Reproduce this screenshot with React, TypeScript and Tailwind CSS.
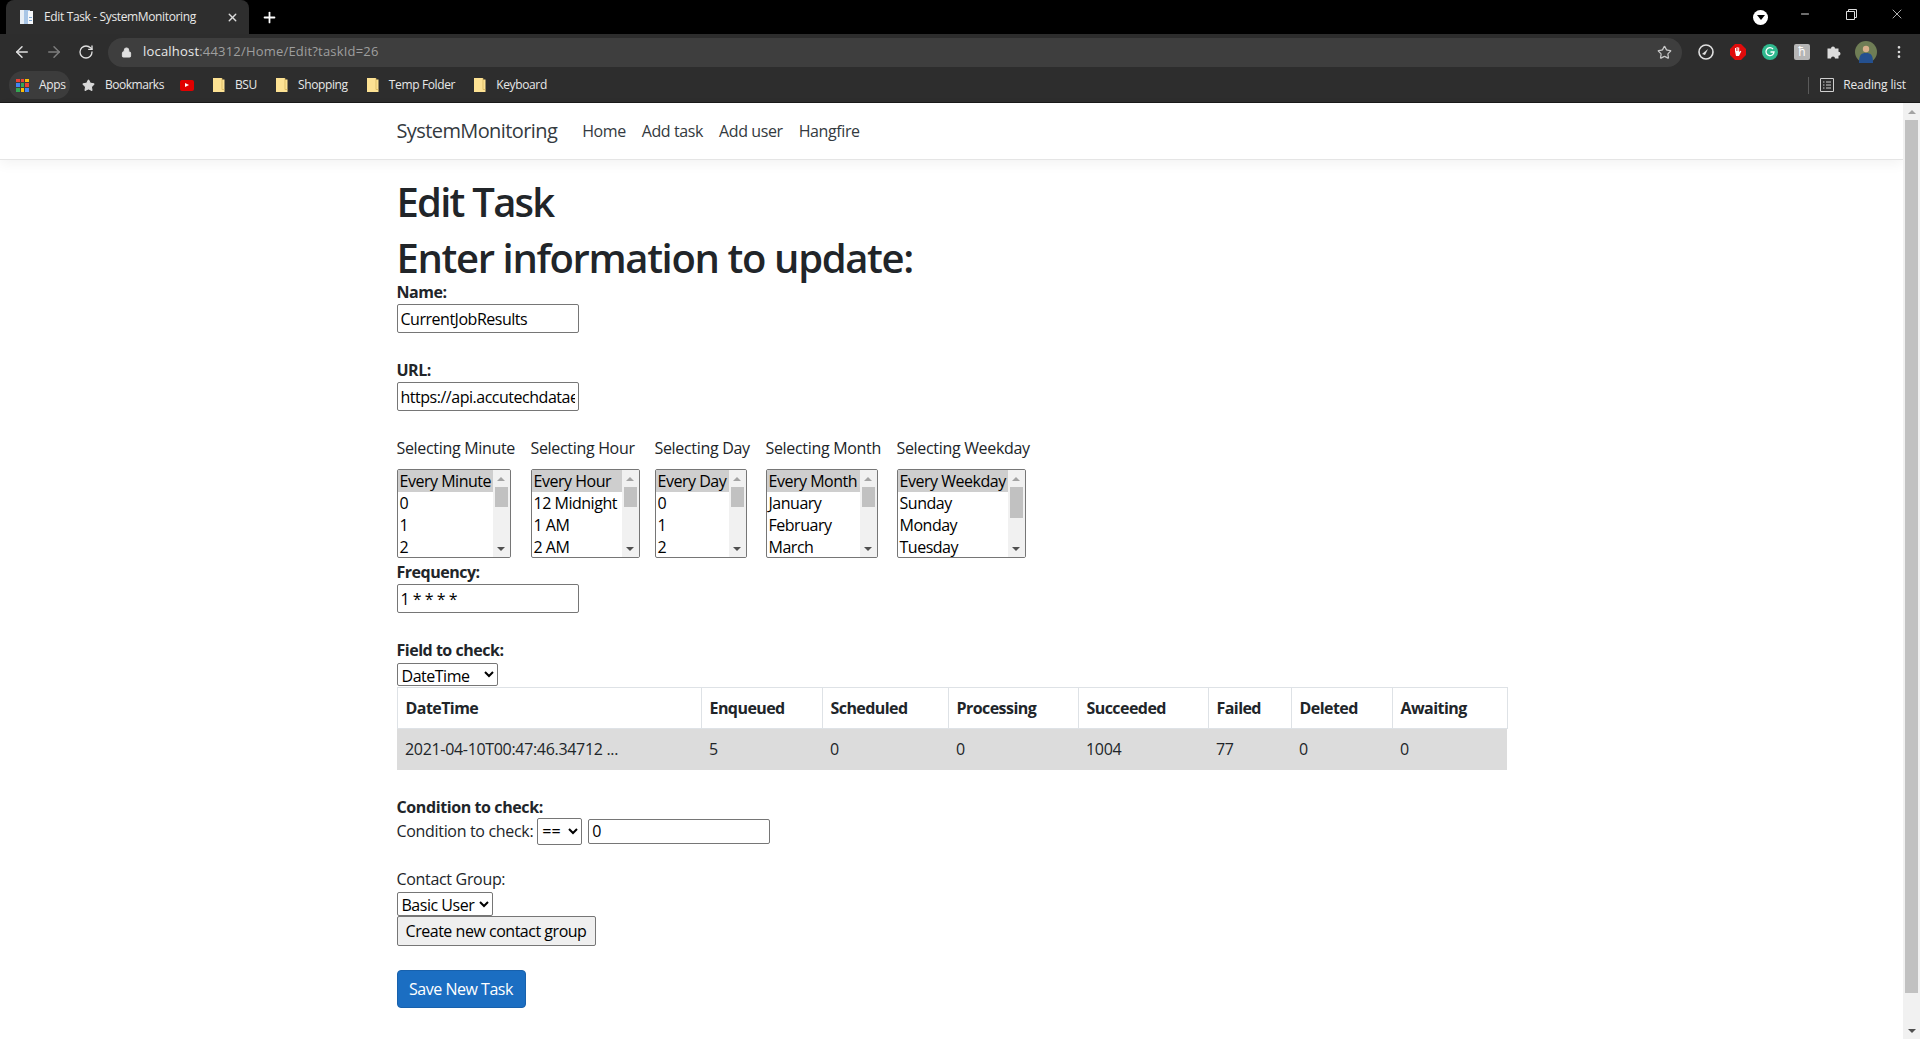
import { ArrowLeft, ArrowRight, RotateCw, Lock, Star, MoreVertical, Plus, X, Minus } from 'lucide-react';

const BOOKMARKS = ['BSU', 'Shopping', 'Temp Folder', 'Keyboard'];

const LISTBOXES = [
  { label: 'Selecting Minute', width: 'w-[114px]', slot: 'w-[134px]', thumb: 'h-[20px]', rows: ['Every Minute', '0', '1', '2'] },
  { label: 'Selecting Hour', width: 'w-[109px]', slot: 'w-[124px]', thumb: 'h-[20px]', rows: ['Every Hour', '12 Midnight', '1 AM', '2 AM'] },
  { label: 'Selecting Day', width: 'w-[92px]', slot: 'w-[111px]', thumb: 'h-[20px]', rows: ['Every Day', '0', '1', '2'] },
  { label: 'Selecting Month', width: 'w-[112px]', slot: 'w-[131px]', thumb: 'h-[20px]', rows: ['Every Month', 'January', 'February', 'March'] },
  { label: 'Selecting Weekday', width: 'w-[129px]', slot: 'w-[140px]', thumb: 'h-[31px]', rows: ['Every Weekday', 'Sunday', 'Monday', 'Tuesday'] },
];

const COLUMNS = [
  { name: 'DateTime', value: '2021-04-10T00:47:46.34712 ...', width: 'w-[304px]' },
  { name: 'Enqueued', value: '5', width: 'w-[121px]' },
  { name: 'Scheduled', value: '0', width: 'w-[126px]' },
  { name: 'Processing', value: '0', width: 'w-[130px]' },
  { name: 'Succeeded', value: '1004', width: 'w-[130px]' },
  { name: 'Failed', value: '77', width: 'w-[83px]' },
  { name: 'Deleted', value: '0', width: 'w-[101px]' },
  { name: 'Awaiting', value: '0', width: 'w-[115px]' },
];

function Folder() {
  return (
    <svg width="14" height="16" viewBox="0 0 14 16" className="shrink-0">
      <path d="M1 1h9v1.5h2.5V15H1z" fill="#fde293" />
      <path d="M10 1v11.5h2.5" fill="none" stroke="#c9a94f" strokeWidth="0.6" />
    </svg>
  );
}

function Favicon() {
  return (
    <svg width="16" height="16" viewBox="0 0 16 16" className="shrink-0">
      <path d="M1 1h8v14H1z" fill="#e8eef5" />
      <path d="M5 1h6v14H5z" fill="#a9c6e6" />
      <path d="M9 2h5v13H9z" fill="#f5f7fa" />
      <path d="M10 8h3v1h-3zM10 11h3v1h-3z" fill="#7da6d1" />
    </svg>
  );
}

function ChromeBars() {
  return (
    <div className="shrink-0 h-[103px] bg-[#2d2d2d] text-white border-b border-[#1a1a1a]">
      <div className="h-[34px] bg-black flex items-end relative">
        <div className="ml-[6px] w-[243px] h-[34px] bg-[#2e2e2e] rounded-t-[8px] flex items-center pl-[13px] pr-[10px] gap-[9px]">
          <Favicon />
          <span className="flex-1 text-[12px] text-[#e8e8e8] tracking-[-0.03em]">Edit Task - SystemMonitoring</span>
          <X size={13} strokeWidth={2.5} className="text-[#dcdcdc]" />
        </div>
        <Plus size={17} strokeWidth={2.5} className="ml-[12px] mb-[8px]" />
        <div className="ml-auto flex items-center h-[34px]">
          <div className="w-[15px] h-[15px] rounded-full bg-white flex items-center justify-center mr-[14px]">
            <div className="w-0 h-0 border-l-[4px] border-r-[4px] border-t-[5px] border-l-transparent border-r-transparent border-t-black" />
          </div>
          <div className="w-[46px] flex justify-center pb-[6px]"><Minus size={12} className="text-[#dddddd]" /></div>
          <div className="w-[46px] flex justify-center pb-[6px]">
            <svg width="11" height="11" viewBox="0 0 11 11" fill="none" stroke="#dddddd"><path d="M.5 2.5h8v8h-8zM2.5 2.5v-2h8v8h-2" /></svg>
          </div>
          <div className="w-[46px] flex justify-center pb-[6px]"><X size={16} strokeWidth={1.2} className="text-[#dddddd]" /></div>
        </div>
      </div>
      <div className="h-[36px] flex items-center pl-[13px] pr-[13px]">
        <ArrowLeft size={18} className="text-[#e0e0e0]" />
        <ArrowRight size={18} className="text-[#7d7d7d] ml-[14px]" />
        <RotateCw size={16} className="text-[#e0e0e0] ml-[15px]" />
        <div className="ml-[14px] flex-1 h-[29px] rounded-full bg-[#3e3e3e] flex items-center pl-[13px] pr-[10px]">
          <Lock size={11} fill="#e0e0e0" className="text-[#e0e0e0]" />
          <span className="ml-[11px] text-[13px] tracking-[0.015em] text-[#e8e8e8]">localhost<span className="text-[#9e9e9e]">:44312/Home/Edit?taskId=26</span></span>
          <Star size={15} className="ml-auto text-[#c8c8c8]" />
        </div>
        <div className="ml-[16px] flex items-center gap-[16px]">
          <svg width="16" height="16" viewBox="0 0 16 16"><circle cx="8" cy="8" r="7" fill="none" stroke="#e0e0e0" strokeWidth="1.6" /><path d="M4 10l6-5-3 6z" fill="#e0e0e0" /></svg>
          <svg width="16" height="16" viewBox="0 0 16 16"><path d="M5 0h6l5 5v6l-5 5H5l-5-5V5z" fill="#e00b0b" /><path d="M5 7V4h1v3h.6V3h1v4h.6V3.5h1V8l1.3-1.3.8.6L9 12H6z" fill="#ffffff" /></svg>
          <svg width="16" height="16" viewBox="0 0 16 16"><circle cx="8" cy="8" r="8" fill="#2fb98e" /><path d="M11 5a4 4 0 1 0 1 3H8.5" fill="none" stroke="#ffffff" strokeWidth="1.3" /></svg>
          <div className="w-[16px] h-[16px] rounded-[2px] bg-[#b5b5b5] flex items-center justify-center text-[12px] leading-none text-white">ħ</div>
          <svg width="16" height="16" viewBox="0 0 16 16"><path d="M1 5h3.5a2 2 0 1 1 4 0H12v3.2a2 2 0 1 1 0 4V15H8.5a2 2 0 1 0-4 0H1z" fill="#dcdcdc" transform="translate(.5 -.5)" /></svg>
        </div>
        <svg width="22" height="22" viewBox="0 0 22 22" className="ml-[13px]">
          <circle cx="11" cy="11" r="11" fill="#6f7d55" />
          <path d="M4 22c0-8 2-10 7-10s7 2 7 10z" fill="#24508f" />
          <circle cx="11" cy="8" r="3.2" fill="#d9b08c" />
        </svg>
        <MoreVertical size={16} className="ml-[14px] text-[#dcdcdc]" />
      </div>
      <div className="h-[30px] flex items-center pl-[9px] pr-[14px] text-[12px] text-[#e8e8e8] tracking-[-0.03em]">
        <div className="h-[28px] w-[61px] rounded-full bg-[#3c3c3c] flex items-center pl-[7px] gap-[10px]">
          <div className="grid grid-cols-3 gap-[1px] w-[13px] h-[13px]">
            {['#ea4335', '#ea4335', '#fbbc04', '#4285f4', '#34a853', '#ea4335', '#34a853', '#fbbc04', '#4285f4'].map((c, i) => (
              <span key={i} style={{ backgroundColor: c }} />
            ))}
          </div>
          Apps
        </div>
        <Star size={13} fill="#d8d8d8" className="text-[#d8d8d8] ml-[12px]" />
        <span className="ml-[10px] tracking-[-0.04em]">Bookmarks</span>
        <div className="ml-[16px] w-[14px] h-[11px] rounded-[2px] bg-[#e00000] flex items-center justify-center">
          <div className="w-0 h-0 border-t-[2.5px] border-b-[2.5px] border-l-[4px] border-t-transparent border-b-transparent border-l-white" />
        </div>
        {BOOKMARKS.map((b) => (
          <div key={b} className="ml-[18px] flex items-center gap-[9px]">
            <Folder />
            <span>{b}</span>
          </div>
        ))}
        <div className="ml-auto flex items-center tracking-[-0.01em]">
          <div className="w-px h-[17px] bg-[#5a5a5a] mr-[11px]" />
          <svg width="14" height="14" viewBox="0 0 14 14" fill="none" stroke="#cfcfcf"><path d="M.5.5h13v13H.5zM3 4h1.5M6 4h5M3 7h1.5M6 7h5M3 10h1.5M6 10h5" /></svg>
          <span className="ml-[9px]">Reading list</span>
        </div>
      </div>
    </div>
  );
}

function Scrollbar({ thumb, page }: { thumb: string; page?: boolean }) {
  return (
    <div className={`shrink-0 bg-[#f1f1f1] flex flex-col items-center ${page ? 'w-[17px]' : 'w-[17px] h-full'}`}>
      <div className="h-[17px] flex items-center justify-center shrink-0">
        <div className="w-0 h-0 border-l-[4px] border-r-[4px] border-b-[4px] border-l-transparent border-r-transparent border-b-[#a3a3a3]" />
      </div>
      <div className={`${thumb} w-[13px] bg-[#c1c1c1] shrink-0`} />
      <div className="mt-auto h-[17px] flex items-center justify-center shrink-0">
        <div className="w-0 h-0 border-l-[4px] border-r-[4px] border-t-[4px] border-l-transparent border-r-transparent border-t-[#505050]" />
      </div>
    </div>
  );
}

function Field({ label, value }: { label: string; value: string }) {
  return (
    <div>
      <div className="font-bold leading-[23px] tracking-[-0.03em]">{label}</div>
      <input
        readOnly
        defaultValue={value}
        className="block w-[182px] h-[29px] border border-[#767676] rounded-[2px] px-[3px] text-[16px] text-black tracking-[-0.03em] outline-none"
      />
    </div>
  );
}

export default function App() {
  return (
    <div className="h-screen flex flex-col overflow-hidden bg-white text-[16px] text-[#212529]" style={{ fontFamily: '"Open Sans", "Noto Sans", sans-serif' }}>
      <ChromeBars />
      <div className="flex-1 flex min-h-0">
        <div className="flex-1 min-w-0">
          <nav className="h-[57px] border-b border-[#e5e5e5] shadow-[0_4px_12px_rgba(0,0,0,0.05)]">
            <div className="w-[1140px] mx-auto px-[15px] h-full flex items-center">
              <a className="text-[20px] text-[#343a40] tracking-[-0.03em]">SystemMonitoring</a>
              <div className="ml-[25px] flex gap-[16px] text-[#343a40] tracking-[-0.025em]">
                <a>Home</a>
                <a>Add task</a>
                <a>Add user</a>
                <a>Hangfire</a>
              </div>
            </div>
          </nav>
          <main className="w-[1140px] mx-auto px-[15px]">
            <h1 className="mt-[18px] text-[40px] leading-[48px] font-semibold tracking-[-0.044em]">Edit Task</h1>
            <h1 className="mt-[8px] text-[40px] leading-[47px] font-semibold tracking-[-0.034em]">Enter information to update:</h1>
            <div className="mt-[0px]">
              <Field label="Name:" value="CurrentJobResults" />
            </div>
            <div className="mt-[26px]">
              <Field label="URL:" value="https://api.accutechdataexchange.com/jobs/current" />
            </div>
            <div className="mt-[25px] flex">
              {LISTBOXES.map((box) => (
                <div key={box.label} className={box.slot}>
                  <div className="leading-[24px] tracking-[-0.02em] whitespace-nowrap">{box.label}</div>
                  <div className={`mt-[9px] h-[89px] ${box.width} border border-[#767676] rounded-[2px] flex overflow-hidden text-black`}>
                    <div className="flex-1 min-w-0 tracking-[-0.03em] whitespace-nowrap overflow-hidden">
                      {box.rows.map((row, i) => (
                        <div key={row} className={`h-[22px] leading-[22px] pl-[2px] ${i === 0 ? 'bg-[#cecece]' : ''}`}>{row}</div>
                      ))}
                    </div>
                    <Scrollbar thumb={box.thumb} />
                  </div>
                </div>
              ))}
            </div>
            <div className="mt-[3px]">
              <Field label="Frequency:" value="1 * * * *" />
            </div>
            <div className="mt-[25px] font-bold leading-[24px] tracking-[-0.03em]">Field to check:</div>
            <select className="block mt-[1px] w-[101px] h-[23px] border border-[#767676] rounded-[2px] text-black text-[16px] tracking-[-0.03em]">
              <option>DateTime</option>
            </select>
            <table className="mt-[1px] w-[1110px] table-fixed border-collapse">
              <thead>
                <tr className="h-[41px]">
                  {COLUMNS.map((col) => (
                    <th key={col.name} className={`${col.width} border border-[#dee2e6] px-[8px] text-left font-bold tracking-[-0.035em] whitespace-nowrap`}>{col.name}</th>
                  ))}
                </tr>
              </thead>
              <tbody>
                <tr className="h-[41px] bg-[#dcdcdc]">
                  {COLUMNS.map((col) => (
                    <td key={col.name} className="px-[8px] tracking-[-0.02em] whitespace-nowrap">{col.value}</td>
                  ))}
                </tr>
              </tbody>
            </table>
            <div className="mt-[25px] font-bold leading-[24px] tracking-[-0.025em]">Condition to check:</div>
            <div className="-mt-[1px] flex items-center h-[27px]">
              <span className="tracking-[-0.02em] whitespace-nowrap">Condition to check:</span>
              <select className="ml-[4px] w-[45px] h-[27px] border border-[#767676] rounded-[2px] text-black text-[16px]">
                <option>==</option>
              </select>
              <input readOnly defaultValue="0" className="ml-[6px] w-[182px] h-[25px] border border-[#767676] rounded-[2px] px-[3px] text-black outline-none" />
            </div>
            <div className="mt-[22px] leading-[24px] tracking-[-0.02em]">Contact Group:</div>
            <select className="block mt-[1px] w-[96px] h-[24px] border border-[#767676] rounded-[2px] text-black text-[16px] tracking-[-0.03em]">
              <option>Basic User</option>
            </select>
            <button className="block w-[199px] h-[30px] border border-[#767676] rounded-[2px] bg-[#efefef] text-black text-[16px] tracking-[-0.03em]">Create new contact group</button>
            <button className="block mt-[24px] w-[129px] h-[38px] rounded-[4px] bg-[#1b6ec2] border border-[#1861ac] text-white text-[16px] tracking-[-0.03em]">Save New Task</button>
          </main>
        </div>
        <Scrollbar thumb="h-[873px]" page />
      </div>
    </div>
  );
}
